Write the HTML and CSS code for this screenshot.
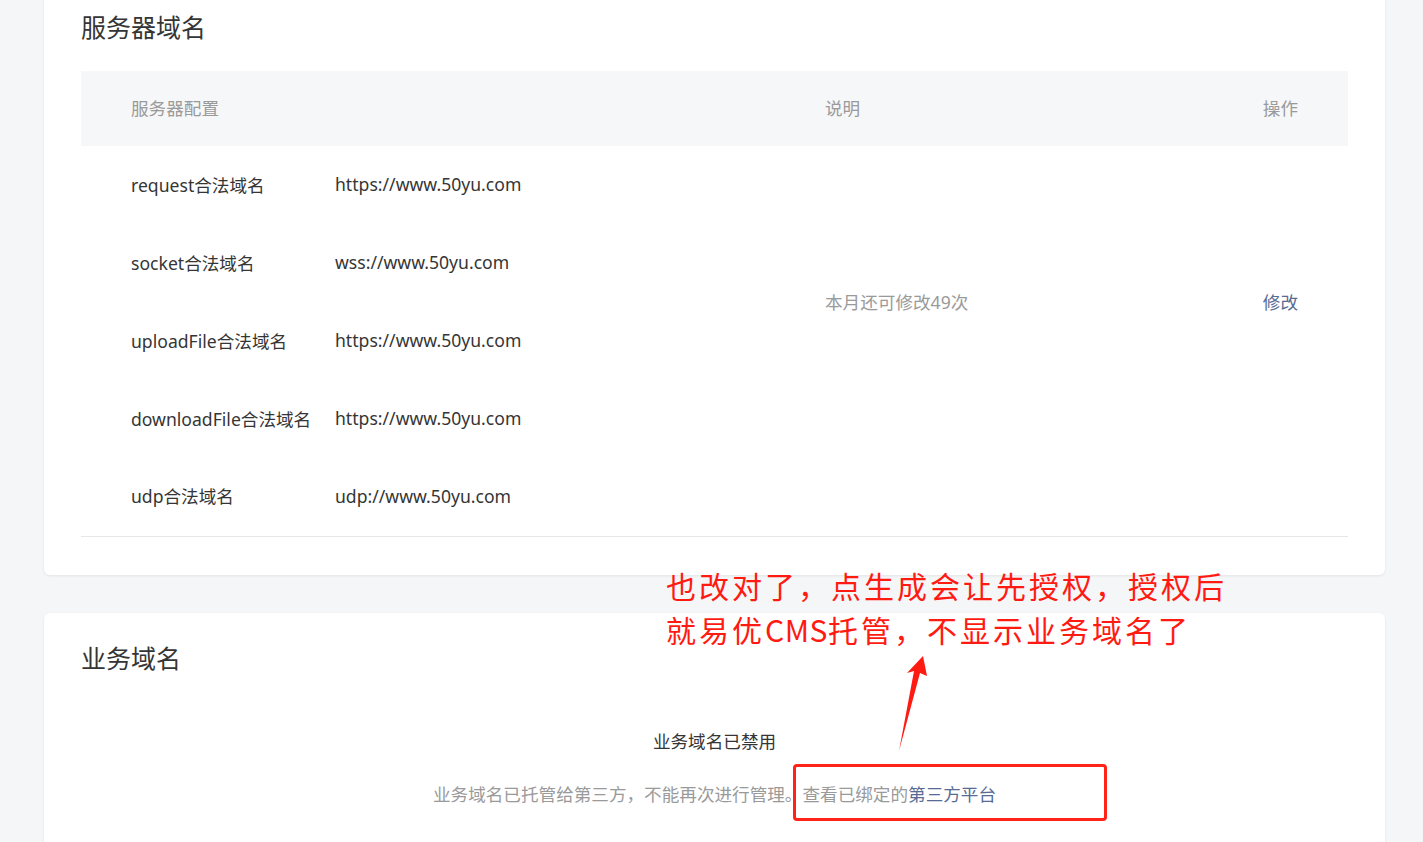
FILE: index.html
```html
<!DOCTYPE html>
<html lang="zh-CN">
<head>
<meta charset="utf-8">
<title>服务器域名</title>
<link rel="stylesheet" href="styles.css">
</head>
<body>
<div class="page">
  <section class="card card-server">
    <h2 class="card-title">服务器域名</h2>
    <table class="domain-table">
      <colgroup>
        <col class="c-label">
        <col class="c-value">
        <col class="c-desc">
        <col class="c-op">
      </colgroup>
      <thead>
        <tr>
          <th colspan="2" class="th-first">服务器配置</th>
          <th>说明</th>
          <th class="th-op">操作</th>
        </tr>
      </thead>
      <tbody>
        <tr>
          <td class="label">request合法域名</td>
          <td class="value">https://www.50yu.com</td>
          <td rowspan="4" class="desc">本月还可修改49次</td>
          <td rowspan="4" class="op"><a class="link">修改</a></td>
        </tr>
        <tr>
          <td class="label">socket合法域名</td>
          <td class="value">wss://www.50yu.com</td>
        </tr>
        <tr>
          <td class="label">uploadFile合法域名</td>
          <td class="value">https://www.50yu.com</td>
        </tr>
        <tr>
          <td class="label">downloadFile合法域名</td>
          <td class="value">https://www.50yu.com</td>
        </tr>
        <tr class="last">
          <td class="label">udp合法域名</td>
          <td class="value">udp://www.50yu.com</td>
          <td></td>
          <td></td>
        </tr>
      </tbody>
    </table>
  </section>

  <section class="card card-biz">
    <h2 class="card-title">业务域名</h2>
    <p class="biz-status">业务域名已禁用</p>
    <p class="biz-tip">业务域名已托管给第三方，不能再次进行管理。查看已绑定的<a class="link">第三方平台</a></p>
  </section>
</div>

<div class="note">
  <div class="note-line">也改对了，点生成会让先授权，授权后</div>
  <div class="note-line">就易优<span class="note-latin">CMS</span>托管，不显示业务域名了</div>
</div>
<svg class="note-arrow" width="40" height="110" viewBox="890 648 40 110" xmlns="http://www.w3.org/2000/svg">
  <polygon points="923,656 927,676 920,673 899,751 914,671 907,673" fill="#ff1a12"/>
</svg>
<div class="note-box"></div>
</body>
</html>
```

FILE: styles.css
```css
* { box-sizing: border-box; }

html, body {
  margin: 0;
  padding: 0;
}

body {
  background: #f5f6f7;
  font-family: "Noto Sans", "Noto Sans CJK SC", sans-serif;
  color: #353535;
  font-size: 17.6px;
  position: relative;
  height: 842px;
  overflow: hidden;
}

.page {
  padding: 0 38px 0 44px;
}

.card {
  width: 1341px;
  background: #fff;
  border-radius: 6px;
  box-shadow: 0 1px 3px rgba(0, 0, 0, 0.08);
  padding: 28px 37px 38px 37px;
}

.card-server {
  margin-top: -18px;
}

.card-biz {
  margin-top: 38px;
  padding-bottom: 60px;
}

.card-title {
  margin: 0;
  font-weight: normal;
  font-size: 25px;
  line-height: 34px;
  color: #353535;
}

.domain-table {
  margin-top: 27px;
  width: 100%;
  border-collapse: collapse;
  table-layout: fixed;
  border-bottom: 1px solid #e7e7eb;
}

.c-label { width: 254px; }
.c-value { width: 490px; }
.c-op { width: 150px; }

.domain-table th {
  background: #f6f7f9;
  height: 75px;
  font-weight: normal;
  color: #9a9a9a;
  text-align: left;
  padding: 0 0 2px;
}

.domain-table .th-first { padding-left: 50px; }
.domain-table .th-op { text-align: right; padding-right: 50px; }

.domain-table td {
  height: 78px;
  padding: 0 0 2px;
  vertical-align: middle;
  white-space: nowrap;
}

.domain-table td.label { padding-left: 50px; }

.domain-table td.desc { color: #9a9a9a; }

.domain-table td.op {
  text-align: right;
  padding-right: 50px;
}

.link {
  color: #576b95;
  text-decoration: none;
  cursor: pointer;
}

.biz-status {
  margin: 53px 0 0;
  text-align: center;
  line-height: 26px;
  color: #353535;
}

.biz-tip {
  margin: 27px 0 0;
  text-align: center;
  line-height: 26px;
  color: #9a9a9a;
}

.note {
  position: absolute;
  left: 666px;
  top: 563px;
  font-family: "Noto Sans CJK SC", sans-serif;
  font-size: 30px;
  letter-spacing: 3px;
  color: #ff1a12;
  white-space: nowrap;
}

.note-line {
  height: 44px;
  line-height: 44px;
}

.note-latin {
  letter-spacing: 0.5px;
}

.note-arrow {
  position: absolute;
  left: 890px;
  top: 648px;
}

.note-box {
  position: absolute;
  left: 793px;
  top: 764px;
  width: 314px;
  height: 57px;
  border: 3px solid #ff2319;
  border-radius: 4px;
}
```
